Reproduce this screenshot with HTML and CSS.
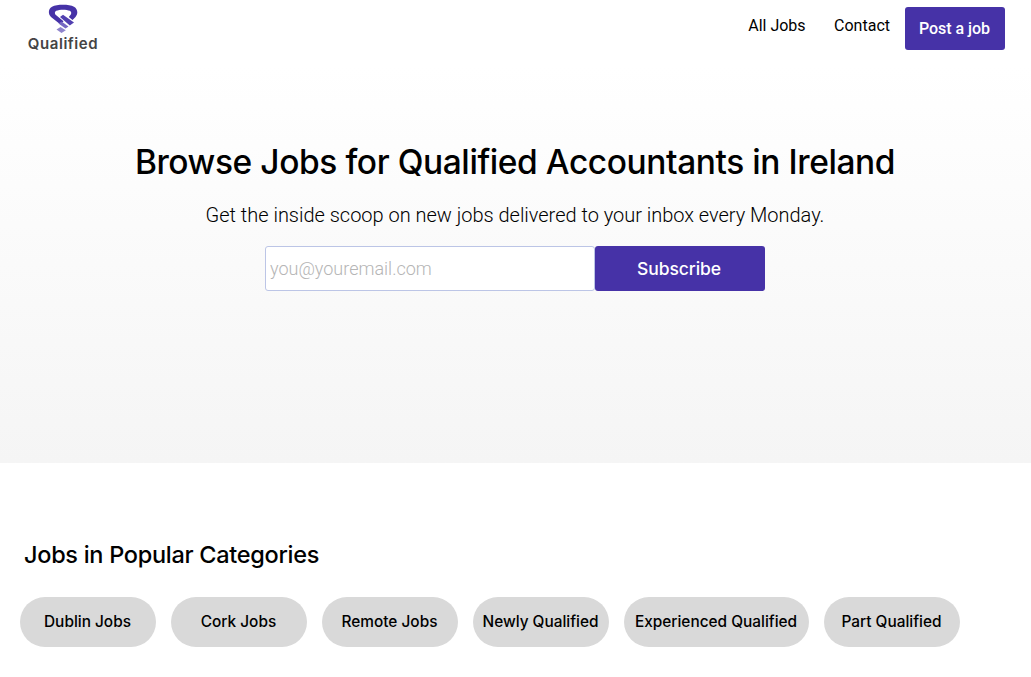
FILE: index.html
```html
<!DOCTYPE html>
<html lang="en">
<head>
<meta charset="utf-8">
<title>Qualified</title>
<link rel="stylesheet" href="styles.css">
</head>
<body>
<div class="hero-wrap">
  <header class="nav">
    <a class="logo" href="#">
      <svg class="logo-mark" viewBox="48 4 30 29" width="30" height="29" aria-hidden="true">
        <path d="M60.5 24.5 L51 17 C48 14 48 9 52 6.8 C57 4.2 69 4.2 74 6.8 C78 9 78.2 14 75.5 17 L72.5 20 L68.8 17 L70.8 14.5 C71.6 13 71.2 11.5 69.8 10.8 C66.5 9.3 59.5 9.3 56.2 10.8 C54.8 11.5 54.4 13.5 55.6 14.8 L63.5 21.2 Z" fill="#4632a7"/>
        <path d="M60 17 L63 14.8 L74 22.6 L69.8 25.6 Z" fill="#5140b0"/>
        <path d="M58.5 23.5 L61.5 21.5 L68.5 26.4 L65.5 28.4 Z" fill="#7568c2"/>
        <path d="M56.5 29.5 L60.5 27 L65.8 30.2 L61.5 33 Z" fill="#8f84cc"/>
      </svg>
      <span class="logo-text">Qualified</span>
    </a>
    <nav class="links">
      <a class="link" href="#">All Jobs</a>
      <a class="link" href="#">Contact</a>
      <a class="post" href="#">Post a job</a>
    </nav>
  </header>
  <section class="hero">
    <h1 class="title">Browse Jobs for Qualified Accountants in Ireland</h1>
    <p class="sub">Get the inside scoop on new jobs delivered to your inbox every Monday.</p>
    <form class="signup">
      <input class="email" type="email" placeholder="you@youremail.com">
      <button class="subscribe" type="button">Subscribe</button>
    </form>
  </section>
</div>
<section class="cats">
  <h2 class="cats-title">Jobs in Popular Categories</h2>
  <div class="pills">
    <a class="pill" href="#">Dublin Jobs</a>
    <a class="pill" href="#">Cork Jobs</a>
    <a class="pill" href="#">Remote Jobs</a>
    <a class="pill" href="#">Newly Qualified</a>
    <a class="pill" href="#">Experienced Qualified</a>
    <a class="pill" href="#">Part Qualified</a>
  </div>
</section>
</body>
</html>
```
FILE: styles.css
```css
* { box-sizing: border-box; }
html, body { margin: 0; padding: 0; background: #fff; }
body { height: 677px; overflow: hidden; color: #000; font-family: "Inter", sans-serif; }
a { text-decoration: none; color: inherit; }
.hero-wrap { height: 463px; background: linear-gradient(#ffffff 0, #ffffff 66px, #f5f5f5 100%); }
.nav { height: 60px; display: flex; justify-content: space-between; align-items: flex-start; padding: 0 26px 0 27px; }
.logo { display: flex; flex-direction: column; align-items: center; width: 72px; padding-top: 4px; }
.logo-mark { display: block; }
.logo-text { font-family: "Inter", sans-serif; font-weight: 600; font-size: 15px; letter-spacing: 0.55px; line-height: 16px; color: #444; margin-top: 3px; white-space: nowrap; }
.links { display: flex; align-items: flex-start; padding-top: 7px; }
.link { font-family: "Roboto", sans-serif; font-size: 16px; line-height: 20px; padding-top: 9px; margin-right: 28.5px; }
.link:nth-child(2) { margin-right: 15px; }
.post { font-family: "Roboto", sans-serif; font-weight: 500; font-size: 16px; letter-spacing: -0.05px; color: #fff; background: #4632a7; border-radius: 3px; width: 100px; height: 43px; padding-right: 1px; display: flex; align-items: center; justify-content: center; }
.hero { display: flex; flex-direction: column; align-items: center; padding: 80px 1px 0 0; }
.title { margin: 0; font-family: "Inter", sans-serif; font-weight: 500; font-size: 33.5px; letter-spacing: -0.42px; line-height: 44px; }
.sub { margin: 19px 0 0; font-family: "Roboto", sans-serif; font-weight: 300; font-size: 20px; letter-spacing: -0.02px; line-height: 24px; }
.signup { display: flex; margin-top: 19px; }
.email { width: 330px; height: 45px; padding: 0 4px; border: 1px solid #bcc5e6; border-radius: 3px; background: #fff; font-family: "Roboto", sans-serif; font-weight: 300; font-size: 18px; outline: none; }
.email::placeholder { color: #b5b5b5; opacity: 1; }
.subscribe { width: 170px; height: 45px; border: 0; border-radius: 3px; background: #4632a7; color: #fff; font-family: "Inter", sans-serif; font-weight: 500; font-size: 17.5px; letter-spacing: -0.1px; padding: 0 2px 0 0; }
.cats { padding: 76px 20px 0; }
.cats-title { margin: 0 0 0 4px; font-family: "Inter", sans-serif; font-weight: 500; font-size: 23.5px; letter-spacing: -0.29px; line-height: 32px; }
.pills { display: flex; gap: 15px; margin-top: 26px; }
.pill { width: 136px; height: 50px; border-radius: 25px; background: #d9d9d9; display: flex; align-items: center; justify-content: center; font-family: "Inter", sans-serif; font-weight: 500; font-size: 15.4px; padding: 0 1px 1px 0; white-space: nowrap; }
.pill:nth-child(5) { width: 185px; }
```
